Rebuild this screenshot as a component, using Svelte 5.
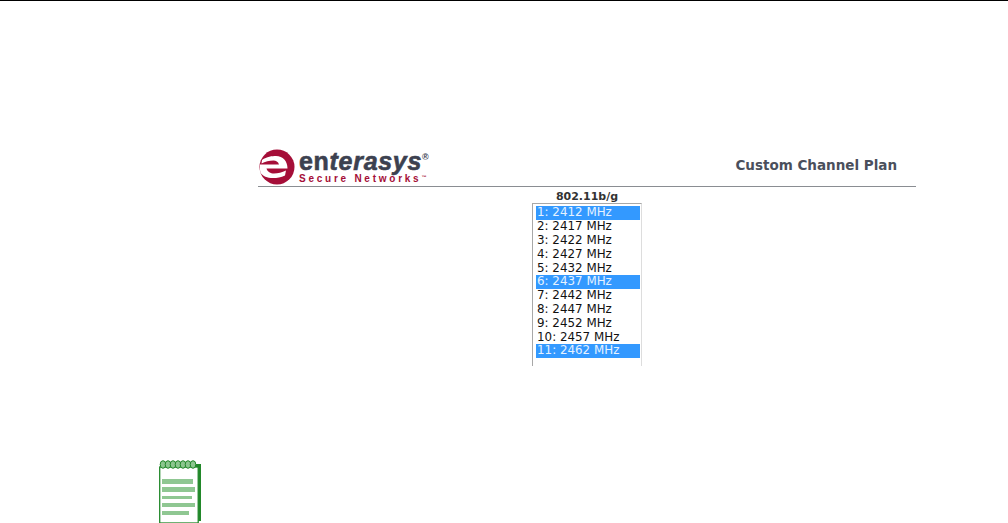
<script>
  const channels = [
    { label: '1: 2412 MHz', selected: true },
    { label: '2: 2417 MHz' },
    { label: '3: 2422 MHz' },
    { label: '4: 2427 MHz' },
    { label: '5: 2432 MHz' },
    { label: '6: 2437 MHz', selected: true },
    { label: '7: 2442 MHz' },
    { label: '8: 2447 MHz' },
    { label: '9: 2452 MHz' },
    { label: '10: 2457 MHz' },
    { label: '11: 2462 MHz', selected: true }
  ];
</script>

<div class="page">
  <div class="panel">
    <header class="head">
      <div class="logo">
        <svg class="mark" width="36" height="36" viewBox="0 0 36 36">
          <circle cx="18" cy="18" r="17.5" fill="#a50e38" />
          <path d="M3 11 C8 7.5 13 7 17 7 C24 7 28.5 12 28.5 19.5 H7.5 C8.5 23 11.5 24.5 15 24.5 C19 24.5 23 23.5 27 21.5 L26 26.5 C22 28.5 18 29 14 29 C8 29 4 27 1.5 24 L1 21 H1 V19.5 H1 V15.5 H20 C19 12.5 17 11.5 14.5 11.5 C10.5 11.5 6 12.5 2.5 14.5 Z" fill="#fff" />
        </svg>
        <div class="wordmark">
          <div class="brand">en<i>terasys</i><sup>®</sup></div>
          <div class="tag">Secure Networks<sup>™</sup></div>
        </div>
      </div>
      <div class="title">Custom Channel Plan</div>
    </header>

    <div class="band">802.11b/g</div>
    <div class="list">
      {#each channels as c}
        <div class="opt" class:selected={c.selected}>{c.label}</div>
      {/each}
    </div>
  </div>

  <div class="note">
    <svg width="43" height="64" viewBox="0 0 43 64">
      <rect x="4" y="4" width="38" height="57" fill="#22882a" />
      <rect x="0.7" y="7" width="38.5" height="56" fill="#fff" stroke="#22882a" stroke-width="1.3" />
      {#each [4, 9, 14, 19, 24, 29, 34] as x}
        <ellipse cx={x} cy="4.5" rx="2.8" ry="3.8" fill="#8cc68f" stroke="#22882a" stroke-width="1" />
      {/each}
      <rect x="3" y="19" width="31" height="5" fill="#8fc792" />
      <rect x="3" y="27" width="33" height="5" fill="#8fc792" />
      <rect x="3" y="36" width="30" height="3" fill="#8fc792" />
      <rect x="3" y="43" width="33" height="4" fill="#8fc792" />
      <rect x="3" y="51" width="27" height="4" fill="#8fc792" />
    </svg>
  </div>
</div>

<style>
  :global(body) {
    margin: 0;
    background: #fff;
  }

  .page {
    width: 1008px;
    height: 523px;
    box-sizing: border-box;
    border-top: 1px solid #000;
    overflow: hidden;
    font-family: "DejaVu Sans", sans-serif;
  }

  .panel {
    width: 658px;
    margin: 147px 0 0 258px;
  }

  .head {
    display: flex;
    justify-content: space-between;
    align-items: flex-end;
    height: 38px;
    border-bottom: 1px solid #8a8d92;
  }

  .logo {
    display: flex;
    align-items: flex-start;
    gap: 4px;
    margin-left: 1px;
    height: 37px;
  }

  .mark {
    flex: none;
  }

  .wordmark {
    font-family: "Liberation Sans", sans-serif;
    font-weight: 700;
    margin-top: 1px;
  }

  .brand {
    font-size: 25px;
    line-height: 23px;
    color: #3c4150;
    letter-spacing: 0.7px;
    -webkit-text-stroke: 0.6px #3c4150;
    white-space: nowrap;
  }

  .brand sup {
    font-size: 9px;
    line-height: 0;
    letter-spacing: 0;
    -webkit-text-stroke: 0;
    vertical-align: 10px;
  }

  .tag {
    font-size: 10px;
    line-height: 10px;
    letter-spacing: 2.75px;
    color: #a50e38;
    white-space: nowrap;
    margin-top: 1px;
  }

  .tag sup {
    font-size: 5px;
    line-height: 0;
    letter-spacing: 0;
    vertical-align: 3px;
  }

  .title {
    font-size: 13.5px;
    font-weight: 700;
    line-height: 16px;
    color: #4a4f5c;
    margin: 0 19px 13px 0;
  }

  .band {
    width: 110px;
    margin: 3px 0 0 274px;
    text-align: center;
    font-size: 11px;
    font-weight: 700;
    line-height: 13px;
    color: #333;
  }

  .list {
    width: 110px;
    height: 163px;
    box-sizing: border-box;
    margin-left: 274px;
    padding: 2.4px 0 0 3px;
    border: 1px solid #a8a8a8;
    border-bottom: none;
    border-right-color: #ddd;
    overflow: hidden;
  }

  .opt {
    width: 104px;
    height: 13.8px;
    line-height: 13.8px;
    padding-left: 1px;
    box-sizing: border-box;
    font-size: 11.9px;
    color: #111;
    white-space: nowrap;
  }

  .opt.selected {
    background: #3399ff;
    color: #e6f2ff;
  }

  .note {
    margin: 94px 0 0 159px;
    line-height: 0;
  }
</style>
